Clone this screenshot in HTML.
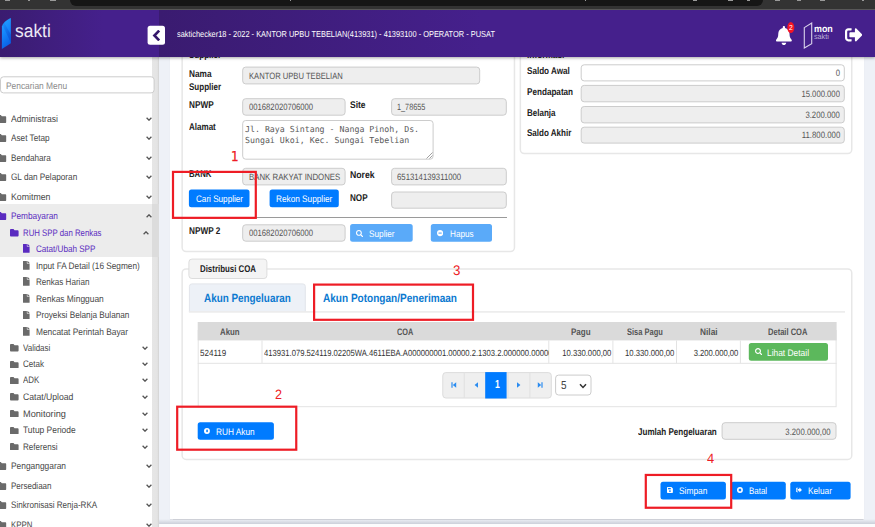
<!DOCTYPE html>
<html lang="id"><head><meta charset="utf-8"><title>SAKTI - Catat/Ubah SPP</title>
<style>
html,body{margin:0;padding:0;}
body{text-rendering:geometricPrecision;width:875px;height:527px;overflow:hidden;position:relative;background:#eef1f7;font-family:"Liberation Sans",sans-serif;}
div,span,svg{position:absolute;box-sizing:border-box;}
.t{white-space:nowrap;display:block;}
.inp{background:#eee;border:1px solid #ccc;border-radius:3px;}
.inpw{background:#fff;border:1px solid #ccc;border-radius:3px;}
.btn{background:#007bff;border-radius:2.5px;}
.btnl{background:#5aaaf9;border-radius:2.5px;}
.fs{border:1px solid #ddd;border-radius:4px;}
.red{border:1.6px solid #ee1c25;}

</style></head>
<body>
<div class="" style="left:170.30px;top:50.00px;width:693.40px;height:468.90px;background:#fff;box-shadow:0 0.5px 1px rgba(0,0,0,.12);"></div>
<svg style="left:180px;top:39px;width:337px;height:215px" viewBox="0 0 337 215"><rect x="2.15" y="1.75" width="332.30" height="210.80" rx="4" fill="none" stroke="#e7e7e7" stroke-width="1.5"/></svg>
<span class="t" id="t0" style="left:189.00px;transform-origin:0 50%;top:48.85px;font-size:9.79px;line-height:13.71px;font-weight:700;color:#222;transform:scaleX(0.8201);">Supplier</span>
<span class="t" id="t1" style="left:189.00px;transform-origin:0 50%;top:67.84px;font-size:9.79px;line-height:13.71px;font-weight:700;color:#222;transform:scaleX(0.8446);">Nama</span>
<span class="t" id="t2" style="left:189.00px;transform-origin:0 50%;top:81.24px;font-size:9.79px;line-height:13.71px;font-weight:700;color:#222;transform:scaleX(0.8201);">Supplier</span>
<svg style="left:241px;top:65px;width:241px;height:21px" viewBox="0 0 241 21"><rect x="1.70" y="2.10" width="237.00" height="16.80" rx="3" fill="#eeeeee" stroke="#cccccc" stroke-width="1.0"/></svg>
<span class="t" id="t3" style="left:248.50px;transform-origin:0 50%;top:70.27px;font-size:9.18px;line-height:12.85px;font-weight:400;color:#555;transform:scaleX(0.8315);">KANTOR UPBU TEBELIAN</span>
<span class="t" id="t4" style="left:189.00px;transform-origin:0 50%;top:98.74px;font-size:9.79px;line-height:13.71px;font-weight:700;color:#222;transform:scaleX(0.8383);">NPWP</span>
<svg style="left:241px;top:97px;width:106px;height:20px" viewBox="0 0 106 20"><rect x="1.70" y="1.70" width="102.40" height="16.50" rx="3" fill="#eeeeee" stroke="#cccccc" stroke-width="1.0"/></svg>
<span class="t" id="t5" style="left:248.50px;transform-origin:0 50%;top:100.97px;font-size:9.18px;line-height:12.85px;font-weight:400;color:#555;transform:scaleX(0.8377);">001682020706000</span>
<span class="t" id="t6" style="left:349.80px;transform-origin:0 50%;top:98.74px;font-size:9.79px;line-height:13.71px;font-weight:700;color:#222;transform:scaleX(0.8689);">Site</span>
<svg style="left:390px;top:97px;width:118px;height:20px" viewBox="0 0 118 20"><rect x="1.60" y="1.70" width="114.70" height="16.50" rx="3" fill="#eeeeee" stroke="#cccccc" stroke-width="1.0"/></svg>
<span class="t" id="t7" style="left:396.60px;transform-origin:0 50%;top:100.97px;font-size:9.18px;line-height:12.85px;font-weight:400;color:#555;transform:scaleX(0.7951);">1_78655</span>
<span class="t" id="t8" style="left:189.00px;transform-origin:0 50%;top:120.84px;font-size:9.79px;line-height:13.71px;font-weight:700;color:#222;transform:scaleX(0.8215);">Alamat</span>
<svg style="left:241px;top:119px;width:194px;height:42px" viewBox="0 0 194 42"><rect x="1.70" y="1.50" width="190.40" height="38.70" rx="3" fill="#ffffff" stroke="#cccccc" stroke-width="1.0"/></svg>
<span class="t" id="t9" style="left:244.70px;transform-origin:0 50%;top:124.07px;font-size:8.33px;line-height:11.66px;font-weight:400;color:#5a5a5a;font-family:'DejaVu Sans Mono','Liberation Mono',monospace;transform:scaleX(0.9920);">Jl. Raya Sintang - Nanga Pinoh, Ds.</span>
<span class="t" id="t10" style="left:244.70px;transform-origin:0 50%;top:135.47px;font-size:8.33px;line-height:11.66px;font-weight:400;color:#5a5a5a;font-family:'DejaVu Sans Mono','Liberation Mono',monospace;transform:scaleX(0.9920);">Sungai Ukoi, Kec. Sungai Tebelian</span>
<svg style="left:425.5px;top:151.5px;width:7px;height:7px" viewBox="0 0 7 7"><path d="M6.5,0.5 L0.5,6.5 M6.5,3.5 L3.5,6.5" stroke="#888" stroke-width="0.8" fill="none"/></svg>
<span class="t" id="t11" style="left:189.00px;transform-origin:0 50%;top:168.25px;font-size:9.79px;line-height:13.71px;font-weight:700;color:#222;transform:scaleX(0.7960);">BANK</span>
<svg style="left:241px;top:166px;width:106px;height:21px" viewBox="0 0 106 21"><rect x="1.70" y="2.30" width="102.40" height="16.60" rx="3" fill="#eeeeee" stroke="#cccccc" stroke-width="1.0"/></svg>
<span class="t" id="t12" style="left:248.50px;transform-origin:0 50%;top:171.47px;font-size:9.18px;line-height:12.85px;font-weight:400;color:#555;transform:scaleX(0.8530);">BANK RAKYAT INDONES</span>
<span class="t" id="t13" style="left:349.80px;transform-origin:0 50%;top:168.84px;font-size:9.79px;line-height:13.71px;font-weight:700;color:#222;transform:scaleX(0.8906);">Norek</span>
<svg style="left:390px;top:166px;width:118px;height:21px" viewBox="0 0 118 21"><rect x="1.60" y="2.30" width="114.70" height="16.60" rx="3" fill="#eeeeee" stroke="#cccccc" stroke-width="1.0"/></svg>
<span class="t" id="t14" style="left:396.60px;transform-origin:0 50%;top:171.47px;font-size:9.18px;line-height:12.85px;font-weight:400;color:#555;transform:scaleX(0.8465);">651314139311000</span>
<svg style="left:187px;top:188px;width:64px;height:21px" viewBox="0 0 64 21"><rect x="1.90" y="1.50" width="60.60" height="17.80" rx="2.5" fill="#007bff"/></svg>
<span class="t" id="t15" style="left:196.00px;transform-origin:0 50%;top:193.05px;font-size:9.49px;line-height:13.29px;font-weight:400;color:#fff;transform:scaleX(0.8572);">Cari Supplier</span>
<svg style="left:268px;top:188px;width:72px;height:21px" viewBox="0 0 72 21"><rect x="1.60" y="1.50" width="69.20" height="17.80" rx="2.5" fill="#007bff"/></svg>
<span class="t" id="t16" style="left:275.90px;transform-origin:0 50%;top:193.05px;font-size:9.49px;line-height:13.29px;font-weight:400;color:#fff;transform:scaleX(0.8680);">Rekon Supplier</span>
<span class="t" id="t17" style="left:349.80px;transform-origin:0 50%;top:192.05px;font-size:9.79px;line-height:13.71px;font-weight:700;color:#222;transform:scaleX(0.8301);">NOP</span>
<svg style="left:390px;top:190px;width:118px;height:20px" viewBox="0 0 118 20"><rect x="1.60" y="2.00" width="114.70" height="16.20" rx="3" fill="#eeeeee" stroke="#cccccc" stroke-width="1.0"/></svg>
<div class="" style="left:189.00px;top:217.00px;width:317.80px;height:1.00px;background:#9a9a9a;"></div>
<span class="t" id="t18" style="left:189.00px;transform-origin:0 50%;top:225.25px;font-size:9.79px;line-height:13.71px;font-weight:700;color:#222;transform:scaleX(0.8385);">NPWP 2</span>
<svg style="left:241px;top:223px;width:106px;height:20px" viewBox="0 0 106 20"><rect x="1.70" y="1.80" width="102.40" height="16.40" rx="3" fill="#eeeeee" stroke="#cccccc" stroke-width="1.0"/></svg>
<span class="t" id="t19" style="left:248.50px;transform-origin:0 50%;top:227.17px;font-size:9.18px;line-height:12.85px;font-weight:400;color:#555;transform:scaleX(0.8377);">001682020706000</span>
<svg style="left:349px;top:223px;width:65px;height:20px" viewBox="0 0 65 20"><rect x="1.10" y="1.00" width="62.60" height="17.80" rx="2.5" fill="#5aaaf9"/></svg>
<svg style="left:356.00px;top:230.10px;width:7.20px;height:7.20px" viewBox="0 0 512 512" preserveAspectRatio="none"><path fill="#fff" d="M505 442.7L405.3 343c-4.5-4.5-10.6-7-17-7H372c27.6-35.3 44-79.7 44-128C416 93.1 322.9 0 208 0S0 93.1 0 208s93.100 208 208 208c48.300 0 92.700-16.400 128-44v16.300c0 6.400 2.500 12.500 7 17l99.700 99.700c9.400 9.400 24.600 9.400 33.900 0l28.300-28.300c9.400-9.400 9.400-24.600.1-34zM208 336c-70.700 0-128-57.200-128-128 0-70.700 57.200-128 128-128 70.700 0 128 57.200 128 128 0 70.700-57.200 128-128 128z"/></svg>
<span class="t" id="t20" style="left:369.00px;transform-origin:0 50%;top:227.55px;font-size:9.49px;line-height:13.29px;font-weight:400;color:#fff;transform:scaleX(0.8669);">Suplier</span>
<svg style="left:429px;top:223px;width:64px;height:20px" viewBox="0 0 64 20"><rect x="1.80" y="1.00" width="61.20" height="17.80" rx="2.5" fill="#5aaaf9"/></svg>
<svg style="left:436.9px;top:230.4px;width:6.2px;height:6.2px" viewBox="0 0 10 10"><circle cx="5" cy="5" r="5" fill="#fff"/><rect x="2.4" y="4.1" width="5.2" height="1.8" fill="#5aaaf9"/></svg>
<span class="t" id="t21" style="left:449.70px;transform-origin:0 50%;top:227.55px;font-size:9.49px;line-height:13.29px;font-weight:400;color:#fff;transform:scaleX(0.8606);">Hapus</span>
<svg style="left:518px;top:39px;width:336px;height:117px" viewBox="0 0 336 117"><rect x="2.35" y="1.75" width="331.40" height="112.80" rx="4" fill="none" stroke="#e7e7e7" stroke-width="1.5"/></svg>
<span class="t" id="t22" style="left:526.80px;transform-origin:0 50%;top:49.24px;font-size:9.79px;line-height:13.71px;font-weight:700;color:#222;transform:scaleX(0.8500);">Informasi</span>
<span class="t" id="t23" style="left:526.80px;transform-origin:0 50%;top:65.24px;font-size:9.79px;line-height:13.71px;font-weight:700;color:#222;transform:scaleX(0.8288);">Saldo Awal</span>
<svg style="left:579px;top:63px;width:267px;height:20px" viewBox="0 0 267 20"><rect x="2.20" y="1.80" width="263.10" height="16.10" rx="3" fill="#ffffff" stroke="#cccccc" stroke-width="1.0"/></svg>
<span class="t" id="t24" style="right:35.20px;transform-origin:100% 50%;top:67.12px;font-size:9.18px;line-height:12.85px;font-weight:400;color:#555;transform:scaleX(0.8416);">0</span>
<span class="t" id="t25" style="left:526.80px;transform-origin:0 50%;top:85.94px;font-size:9.79px;line-height:13.71px;font-weight:700;color:#222;transform:scaleX(0.8313);">Pendapatan</span>
<svg style="left:579px;top:83px;width:267px;height:21px" viewBox="0 0 267 21"><rect x="2.20" y="2.40" width="263.10" height="16.40" rx="3" fill="#eeeeee" stroke="#cccccc" stroke-width="1.0"/></svg>
<span class="t" id="t26" style="right:35.20px;transform-origin:100% 50%;top:87.88px;font-size:9.18px;line-height:12.85px;font-weight:400;color:#555;transform:scaleX(0.8387);">15.000.000</span>
<span class="t" id="t27" style="left:526.80px;transform-origin:0 50%;top:106.84px;font-size:9.79px;line-height:13.71px;font-weight:700;color:#222;transform:scaleX(0.8190);">Belanja</span>
<svg style="left:579px;top:105px;width:267px;height:20px" viewBox="0 0 267 20"><rect x="2.20" y="1.50" width="263.10" height="16.40" rx="3" fill="#eeeeee" stroke="#cccccc" stroke-width="1.0"/></svg>
<span class="t" id="t28" style="right:35.20px;transform-origin:100% 50%;top:108.97px;font-size:9.18px;line-height:12.85px;font-weight:400;color:#555;transform:scaleX(0.8429);">3.200.000</span>
<span class="t" id="t29" style="left:526.80px;transform-origin:0 50%;top:126.94px;font-size:9.79px;line-height:13.71px;font-weight:700;color:#222;transform:scaleX(0.8204);">Saldo Akhir</span>
<svg style="left:579px;top:125px;width:267px;height:20px" viewBox="0 0 267 20"><rect x="2.20" y="2.20" width="263.10" height="15.90" rx="3" fill="#eeeeee" stroke="#cccccc" stroke-width="1.0"/></svg>
<span class="t" id="t30" style="right:35.20px;transform-origin:100% 50%;top:129.42px;font-size:9.18px;line-height:12.85px;font-weight:400;color:#555;transform:scaleX(0.8511);">11.800.000</span>
<svg style="left:180px;top:267px;width:674px;height:195px" viewBox="0 0 674 195"><rect x="2.15" y="1.95" width="669.60" height="190.50" rx="4" fill="none" stroke="#e7e7e7" stroke-width="1.5"/></svg>
<svg style="left:187px;top:257px;width:82px;height:23px" viewBox="0 0 82 23"><rect x="1.90" y="2.10" width="78.00" height="19.40" rx="3" fill="#f4f4f4" stroke="#dddddd" stroke-width="1.0"/></svg>
<span class="t" id="t31" style="left:199.50px;transform-origin:0 50%;top:262.85px;font-size:9.79px;line-height:13.71px;font-weight:700;color:#222;transform:scaleX(0.8050);">Distribusi COA</span>
<svg style="left:187px;top:282px;width:120px;height:34px" viewBox="0 0 120 34"><rect x="2.40" y="1.90" width="115.90" height="30.40" rx="2.5" fill="#edf1f7" stroke="#e2e5ea" stroke-width="1.0"/></svg>
<div class="" style="left:187.00px;top:311.90px;width:121.00px;height:4.00px;background:#fff;"></div>
<svg style="left:187px;top:310px;width:659px;height:4px" viewBox="0 0 659 4"><rect x="1.90" y="1.10" width="656.10" height="1.60" rx="0" fill="#ececec"/></svg>
<span class="t" id="t32" style="left:204.00px;transform-origin:0 50%;top:290.42px;font-size:11.83px;line-height:16.56px;font-weight:700;color:#0b79d0;transform:scaleX(0.8357);">Akun Pengeluaran</span>
<span class="t" id="t33" style="left:322.70px;transform-origin:0 50%;top:290.42px;font-size:11.83px;line-height:16.56px;font-weight:700;color:#0b79d0;transform:scaleX(0.8495);">Akun Potongan/Penerimaan</span>
<svg style="left:196px;top:329px;width:642px;height:80px" viewBox="0 0 642 80"><rect x="2.20" y="1.50" width="637.90" height="76.20" rx="0" fill="none" stroke="#e3e3e3" stroke-width="1.0"/></svg>
<svg style="left:196px;top:321px;width:642px;height:21px" viewBox="0 0 642 21"><rect x="1.70" y="1.00" width="638.90" height="18.40" rx="0" fill="#dadada"/></svg>
<span class="t" id="t34" style="left:219.60px;transform-origin:0 50%;top:325.86px;font-size:9.49px;line-height:13.29px;font-weight:700;color:#555;transform:scaleX(0.8264);">Akun</span>
<span class="t" id="t35" style="left:396.90px;transform-origin:0 50%;top:325.86px;font-size:9.49px;line-height:13.29px;font-weight:700;color:#555;transform:scaleX(0.7733);">COA</span>
<span class="t" id="t36" style="left:570.70px;transform-origin:0 50%;top:325.86px;font-size:9.49px;line-height:13.29px;font-weight:700;color:#555;transform:scaleX(0.8447);">Pagu</span>
<span class="t" id="t37" style="left:626.70px;transform-origin:0 50%;top:325.86px;font-size:9.49px;line-height:13.29px;font-weight:700;color:#555;transform:scaleX(0.7895);">Sisa Pagu</span>
<span class="t" id="t38" style="left:699.70px;transform-origin:0 50%;top:325.86px;font-size:9.49px;line-height:13.29px;font-weight:700;color:#555;transform:scaleX(0.8786);">Nilai</span>
<span class="t" id="t39" style="left:768.00px;transform-origin:0 50%;top:325.86px;font-size:9.49px;line-height:13.29px;font-weight:700;color:#555;transform:scaleX(0.7952);">Detail COA</span>
<svg style="left:196px;top:361px;width:642px;height:4px" viewBox="0 0 642 4"><rect x="1.70" y="1.80" width="638.90" height="1.00" rx="0" fill="#e3e3e3"/></svg>
<svg style="left:260px;top:339px;width:4px;height:26px" viewBox="0 0 4 26"><rect x="1.50" y="1.40" width="1.00" height="22.80" rx="0" fill="#e3e3e3"/></svg>
<svg style="left:547px;top:339px;width:4px;height:26px" viewBox="0 0 4 26"><rect x="1.30" y="1.40" width="1.00" height="22.80" rx="0" fill="#e3e3e3"/></svg>
<svg style="left:611px;top:339px;width:4px;height:26px" viewBox="0 0 4 26"><rect x="1.40" y="1.40" width="1.00" height="22.80" rx="0" fill="#e3e3e3"/></svg>
<svg style="left:675px;top:339px;width:3px;height:26px" viewBox="0 0 3 26"><rect x="1.00" y="1.40" width="1.00" height="22.80" rx="0" fill="#e3e3e3"/></svg>
<svg style="left:738px;top:339px;width:4px;height:26px" viewBox="0 0 4 26"><rect x="1.90" y="1.40" width="1.00" height="22.80" rx="0" fill="#e3e3e3"/></svg>
<span class="t" id="t40" style="left:199.70px;transform-origin:0 50%;top:346.81px;font-size:8.98px;line-height:12.57px;font-weight:400;color:#333;transform:scaleX(0.8952);">524119</span>
<div style="left:263px;top:341px;width:285.6px;height:22px;overflow:hidden;">
<span class="t" id="t41" style="left:0.80px;transform-origin:0 50%;top:5.81px;font-size:8.98px;line-height:12.57px;font-weight:400;color:#333;transform:scaleX(0.8522);">413931.079.524119.02205WA.4611EBA.A000000001.00000.2.1303.2.000000.000000</span>
</div>
<span class="t" id="t42" style="right:263.80px;transform-origin:100% 50%;top:346.81px;font-size:8.98px;line-height:12.57px;font-weight:400;color:#333;transform:scaleX(0.8560);">10.330.000,00</span>
<span class="t" id="t43" style="right:200.20px;transform-origin:100% 50%;top:346.81px;font-size:8.98px;line-height:12.57px;font-weight:400;color:#333;transform:scaleX(0.8595);">10.330.000,00</span>
<span class="t" id="t44" style="right:136.40px;transform-origin:100% 50%;top:346.81px;font-size:8.98px;line-height:12.57px;font-weight:400;color:#333;transform:scaleX(0.8535);">3.200.000,00</span>
<svg style="left:747px;top:342px;width:82px;height:20px" viewBox="0 0 82 20"><rect x="1.80" y="1.00" width="79.20" height="17.80" rx="2.5" fill="#5cb85c"/></svg>
<svg style="left:754.60px;top:348.00px;width:7.40px;height:7.40px" viewBox="0 0 512 512" preserveAspectRatio="none"><path fill="#fff" d="M505 442.7L405.3 343c-4.5-4.5-10.6-7-17-7H372c27.6-35.3 44-79.7 44-128C416 93.1 322.9 0 208 0S0 93.1 0 208s93.100 208 208 208c48.300 0 92.700-16.400 128-44v16.300c0 6.400 2.500 12.500 7 17l99.700 99.700c9.400 9.400 24.600 9.400 33.900 0l28.300-28.300c9.400-9.400 9.400-24.600.1-34zM208 336c-70.700 0-128-57.200-128-128 0-70.700 57.200-128 128-128 70.700 0 128 57.200 128 128 0 70.700-57.200 128-128 128z"/></svg>
<span class="t" id="t45" style="left:767.40px;transform-origin:0 50%;top:346.66px;font-size:9.49px;line-height:13.29px;font-weight:400;color:#fff;transform:scaleX(0.8851);">Lihat Detail</span>
<svg style="left:441px;top:371px;width:112px;height:29px" viewBox="0 0 112 29"><rect x="1.80" y="1.60" width="108.50" height="25.40" rx="3" fill="#efefef" stroke="#dcdcdc" stroke-width="1.0"/></svg>
<svg style="left:462px;top:371px;width:4px;height:28px" viewBox="0 0 4 28"><rect x="1.70" y="1.60" width="1.00" height="25.40" rx="0" fill="#e0e0e0"/></svg>
<svg style="left:484px;top:371px;width:4px;height:28px" viewBox="0 0 4 28"><rect x="1.60" y="1.60" width="1.00" height="25.40" rx="0" fill="#e0e0e0"/></svg>
<svg style="left:506px;top:371px;width:4px;height:28px" viewBox="0 0 4 28"><rect x="1.50" y="1.60" width="1.00" height="25.40" rx="0" fill="#e0e0e0"/></svg>
<svg style="left:528px;top:371px;width:4px;height:28px" viewBox="0 0 4 28"><rect x="1.40" y="1.60" width="1.00" height="25.40" rx="0" fill="#e0e0e0"/></svg>
<svg style="left:484px;top:371px;width:24px;height:29px" viewBox="0 0 24 29"><rect x="1.20" y="1.10" width="21.40" height="26.40" rx="0" fill="#007bff"/></svg>
<span class="t" id="t46" style="left:494.60px;transform-origin:0 50%;top:376.56px;font-size:11.63px;line-height:16.28px;font-weight:700;color:#fff;transform:scaleX(0.7420);">1</span>
<svg style="left:450.5px;top:382.0px;width:6px;height:6px" viewBox="0 0 6 6"><path d="M0.4,0.3 h1.2 v5.4 h-1.2 z M5.2,0.3 v5.4 L1.8,3 z" fill="#2b8cf0"/></svg>
<svg style="left:473.5px;top:382.0px;width:5px;height:6px" viewBox="0 0 5 6"><path d="M4,0.3 v5.4 L0.6,3 z" fill="#2b8cf0"/></svg>
<svg style="left:516.0px;top:382.0px;width:5px;height:6px" viewBox="0 0 5 6"><path d="M1,0.3 v5.4 L4.4,3 z" fill="#2b8cf0"/></svg>
<svg style="left:536.5px;top:382.0px;width:6px;height:6px" viewBox="0 0 6 6"><path d="M5.600,0.3 h-1.2 v5.4 h1.2 z M0.8,0.3 v5.4 L4.2,3 z" fill="#2b8cf0"/></svg>
<svg style="left:554px;top:373px;width:39px;height:24px" viewBox="0 0 39 24"><rect x="1.60" y="2.10" width="35.40" height="19.90" rx="3" fill="#ffffff" stroke="#cccccc" stroke-width="1.0"/></svg>
<span class="t" id="t47" style="left:560.60px;transform-origin:0 50%;top:378.16px;font-size:11.63px;line-height:16.28px;font-weight:400;color:#444;transform:scaleX(0.8502);">5</span>
<svg style="left:578.6px;top:382.6px;width:8px;height:6px" viewBox="0 0 8 6"><path d="M1,1.2 L4,4.4 L7,1.2" fill="none" stroke="#333" stroke-width="1.5"/></svg>
<svg style="left:196px;top:421px;width:79px;height:20px" viewBox="0 0 79 20"><rect x="1.70" y="1.20" width="76.20" height="17.60" rx="2.5" fill="#007bff"/></svg>
<svg style="left:203.8px;top:427.8px;width:5.9px;height:5.9px" viewBox="0 0 10 10"><circle cx="5" cy="5" r="5" fill="#fff"/><ellipse cx="5.200" cy="5" rx="1.500" ry="2.300" fill="#007bff"/></svg>
<span class="t" id="t48" style="left:216.30px;transform-origin:0 50%;top:425.66px;font-size:9.49px;line-height:13.29px;font-weight:400;color:#fff;transform:scaleX(0.8740);">RUH Akun</span>
<span class="t" id="t49" style="left:638.00px;transform-origin:0 50%;top:425.64px;font-size:9.79px;line-height:13.71px;font-weight:700;color:#222;transform:scaleX(0.8236);">Jumlah Pengeluaran</span>
<svg style="left:720px;top:421px;width:118px;height:20px" viewBox="0 0 118 20"><rect x="2.10" y="1.70" width="113.90" height="16.60" rx="3" fill="#eeeeee" stroke="#cccccc" stroke-width="1.0"/></svg>
<span class="t" id="t50" style="right:44.00px;transform-origin:100% 50%;top:425.98px;font-size:9.18px;line-height:12.85px;font-weight:400;color:#555;transform:scaleX(0.8439);">3.200.000,00</span>
<svg style="left:659px;top:480px;width:68px;height:21px" viewBox="0 0 68 21"><rect x="1.50" y="1.70" width="65.40" height="17.70" rx="2.5" fill="#007bff"/></svg>
<svg style="left:666.9px;top:487.1px;width:5.9px;height:5.9px" viewBox="0 0 10 10"><path d="M0,1.200 a1.200,1.200 0 0 1 1.200,-1.200 h6.200 l2.600,2.600 v6.200 a1.200,1.200 0 0 1 -1.200,1.200 h-7.600 a1.200,1.200 0 0 1 -1.200,-1.200 z" fill="#fff"/><rect x="1.800" y="1.600" width="4.600" height="2.300" fill="#007bff"/><circle cx="5" cy="6.900" r="1.500" fill="#007bff"/></svg>
<span class="t" id="t51" style="left:678.90px;transform-origin:0 50%;top:485.16px;font-size:9.49px;line-height:13.29px;font-weight:400;color:#fff;transform:scaleX(0.8828);">Simpan</span>
<svg style="left:730px;top:480px;width:57px;height:21px" viewBox="0 0 57 21"><rect x="1.00" y="1.70" width="54.80" height="17.70" rx="2.5" fill="#007bff"/></svg>
<svg style="left:736.9px;top:487.1px;width:5.9px;height:5.9px" viewBox="0 0 10 10"><circle cx="5" cy="5" r="5" fill="#fff"/><path d="M3.100,3.100 L6.900,6.900 M6.900,3.100 L3.100,6.900" stroke="#007bff" stroke-width="1.700"/></svg>
<span class="t" id="t52" style="left:748.80px;transform-origin:0 50%;top:485.16px;font-size:9.49px;line-height:13.29px;font-weight:400;color:#fff;transform:scaleX(0.8370);">Batal</span>
<svg style="left:789px;top:480px;width:63px;height:21px" viewBox="0 0 63 21"><rect x="1.30" y="1.70" width="60.30" height="17.70" rx="2.5" fill="#007bff"/></svg>
<svg style="left:796.40px;top:487.00px;width:5.90px;height:5.90px" viewBox="0 0 512 512" preserveAspectRatio="none"><path fill="#fff" d="M497 273L329 441c-15 15-41 4.500-41-17v-96H152c-13.300 0-24-10.700-24-24v-96c0-13.300 10.700-24 24-24h136V88c0-21.400 25.900-32 41-17l168 168c9.300 9.400 9.300 24.600 0 34zM192 436v-40c0-6.600-5.400-12-12-12H96c-17.700 0-32-14.300-32-32V160c0-17.700 14.300-32 32-32h84c6.600 0 12-5.400 12-12V76c0-6.600-5.400-12-12-12H96c-53 0-96 43-96 96v192c0 53 43 96 96 96h84c6.600 0 12-5.400 12-12z"/></svg>
<span class="t" id="t53" style="left:808.40px;transform-origin:0 50%;top:485.16px;font-size:9.49px;line-height:13.29px;font-weight:400;color:#fff;transform:scaleX(0.8716);">Keluar</span>
<svg style="left:170px;top:169px;width:88px;height:51px" viewBox="0 0 88 51"><rect x="3.00" y="2.90" width="82.80" height="45.95" rx="0" fill="none" stroke="#ee1c25" stroke-width="2.2"/></svg>
<span class="t" id="t54" style="left:231.00px;transform-origin:0 50%;top:147.58px;font-size:13.6px;line-height:19.04px;font-weight:400;color:#ee1c25;font-family:'DejaVu Sans',sans-serif;transform:scaleX(0.8780);-webkit-text-stroke:0.3px #ee1c25;">1</span>
<svg style="left:175px;top:404px;width:124px;height:48px" viewBox="0 0 124 48"><rect x="2.20" y="2.70" width="119.05" height="43.00" rx="0" fill="none" stroke="#ee1c25" stroke-width="2.2"/></svg>
<span class="t" id="t55" style="left:274.60px;transform-origin:0 50%;top:385.08px;font-size:13.6px;line-height:19.04px;font-weight:400;color:#ee1c25;transform:scaleX(0.9256);">2</span>
<svg style="left:312px;top:282px;width:164px;height:40px" viewBox="0 0 164 40"><rect x="2.10" y="2.60" width="158.90" height="35.20" rx="0" fill="none" stroke="#ee1c25" stroke-width="2.2"/></svg>
<span class="t" id="t56" style="left:452.60px;transform-origin:0 50%;top:260.54px;font-size:13.8px;line-height:19.32px;font-weight:400;color:#ee1c25;transform:scaleX(0.9626);">3</span>
<svg style="left:643px;top:472px;width:91px;height:38px" viewBox="0 0 91 38"><rect x="2.80" y="2.95" width="85.40" height="32.80" rx="0" fill="none" stroke="#ee1c25" stroke-width="2.2"/></svg>
<span class="t" id="t57" style="left:706.60px;transform-origin:0 50%;top:449.18px;font-size:13.6px;line-height:19.04px;font-weight:400;color:#ee1c25;transform:scaleX(0.9521);">4</span>
<div class="" style="left:158.90px;top:519.00px;width:716.10px;height:4.80px;background:linear-gradient(180deg,rgba(80,90,110,0) 0%,rgba(80,90,110,.22) 100%);"></div>
<div class="" style="left:158.90px;top:523.70px;width:716.10px;height:4.00px;background:#fcfcfd;"></div>
<div class="" style="left:0.00px;top:50.00px;width:152.10px;height:480.00px;background:#fff;"></div>
<div class="" style="left:152.10px;top:50.00px;width:6.80px;height:480.00px;background:linear-gradient(90deg,#e6e6e6 0%,#e4e4e4 75%,#d2d2d2 100%);"></div>
<div class="" style="left:0.00px;top:204.40px;width:152.10px;height:52.60px;background:#ececec;"></div>
<div class="" style="left:152.10px;top:204.40px;width:6.80px;height:52.60px;background:#dcdcdc;"></div>
<svg style="left:-1px;top:75px;width:157px;height:20px" viewBox="0 0 157 20"><rect x="1.50" y="1.80" width="153.60" height="16.10" rx="3" fill="#ffffff" stroke="#cccccc" stroke-width="1.0"/></svg>
<span class="t" id="t58" style="left:5.50px;transform-origin:0 50%;top:79.66px;font-size:9.49px;line-height:13.29px;font-weight:400;color:#8a8a8a;transform:scaleX(0.8845);">Pencarian Menu</span>
<svg style="left:-2.60px;top:114.60px;width:9.20px;height:8.00px" viewBox="0 64 512 384" preserveAspectRatio="none"><path fill="#6a6a6a" d="M464 128H272l-64-64H48C21.49 64 0 85.49 0 112v288c0 26.51 21.49 48 48 48h416c26.51 0 48-21.49 48-48V176c0-26.51-21.49-48-48-48z"/></svg>
<span class="t" id="t59" style="left:10.50px;transform-origin:0 50%;top:112.75px;font-size:9.49px;line-height:13.29px;font-weight:400;color:#474747;transform:scaleX(0.9079);">Administrasi</span>
<svg style="left:145.80px;top:116.60px;width:6px;height:4px" viewBox="0 0 6 4"><path d="M0.6,0.8 L3,3.2 L5.4,0.8" fill="none" stroke="#555" stroke-width="1.3"/></svg>
<svg style="left:-2.60px;top:134.30px;width:9.20px;height:8.00px" viewBox="0 64 512 384" preserveAspectRatio="none"><path fill="#6a6a6a" d="M464 128H272l-64-64H48C21.49 64 0 85.49 0 112v288c0 26.51 21.49 48 48 48h416c26.51 0 48-21.49 48-48V176c0-26.51-21.49-48-48-48z"/></svg>
<span class="t" id="t60" style="left:10.50px;transform-origin:0 50%;top:132.45px;font-size:9.49px;line-height:13.29px;font-weight:400;color:#474747;transform:scaleX(0.8666);">Aset Tetap</span>
<svg style="left:145.80px;top:136.30px;width:6px;height:4px" viewBox="0 0 6 4"><path d="M0.6,0.8 L3,3.2 L5.4,0.8" fill="none" stroke="#555" stroke-width="1.3"/></svg>
<svg style="left:-2.60px;top:153.60px;width:9.20px;height:8.00px" viewBox="0 64 512 384" preserveAspectRatio="none"><path fill="#6a6a6a" d="M464 128H272l-64-64H48C21.49 64 0 85.49 0 112v288c0 26.51 21.49 48 48 48h416c26.51 0 48-21.49 48-48V176c0-26.51-21.49-48-48-48z"/></svg>
<span class="t" id="t61" style="left:10.50px;transform-origin:0 50%;top:151.75px;font-size:9.49px;line-height:13.29px;font-weight:400;color:#474747;transform:scaleX(0.8574);">Bendahara</span>
<svg style="left:145.80px;top:155.60px;width:6px;height:4px" viewBox="0 0 6 4"><path d="M0.6,0.8 L3,3.2 L5.4,0.8" fill="none" stroke="#555" stroke-width="1.3"/></svg>
<svg style="left:-2.60px;top:173.30px;width:9.20px;height:8.00px" viewBox="0 64 512 384" preserveAspectRatio="none"><path fill="#6a6a6a" d="M464 128H272l-64-64H48C21.49 64 0 85.49 0 112v288c0 26.51 21.49 48 48 48h416c26.51 0 48-21.49 48-48V176c0-26.51-21.49-48-48-48z"/></svg>
<span class="t" id="t62" style="left:10.50px;transform-origin:0 50%;top:171.45px;font-size:9.49px;line-height:13.29px;font-weight:400;color:#474747;transform:scaleX(0.8638);">GL dan Pelaporan</span>
<svg style="left:145.80px;top:175.30px;width:6px;height:4px" viewBox="0 0 6 4"><path d="M0.6,0.8 L3,3.2 L5.4,0.8" fill="none" stroke="#555" stroke-width="1.3"/></svg>
<svg style="left:-2.60px;top:192.70px;width:9.20px;height:8.00px" viewBox="0 64 512 384" preserveAspectRatio="none"><path fill="#6a6a6a" d="M464 128H272l-64-64H48C21.49 64 0 85.49 0 112v288c0 26.51 21.49 48 48 48h416c26.51 0 48-21.49 48-48V176c0-26.51-21.49-48-48-48z"/></svg>
<span class="t" id="t63" style="left:10.50px;transform-origin:0 50%;top:190.85px;font-size:9.49px;line-height:13.29px;font-weight:400;color:#474747;transform:scaleX(0.9250);">Komitmen</span>
<svg style="left:145.80px;top:194.70px;width:6px;height:4px" viewBox="0 0 6 4"><path d="M0.6,0.8 L3,3.2 L5.4,0.8" fill="none" stroke="#555" stroke-width="1.3"/></svg>
<svg style="left:-2.60px;top:212.30px;width:9.20px;height:8.00px" viewBox="0 64 512 384" preserveAspectRatio="none"><path fill="#5a2bc0" d="M464 128H272l-64-64H48C21.49 64 0 85.49 0 112v288c0 26.51 21.49 48 48 48h416c26.51 0 48-21.49 48-48V176c0-26.51-21.49-48-48-48z"/></svg>
<span class="t" id="t64" style="left:10.50px;transform-origin:0 50%;top:210.45px;font-size:9.49px;line-height:13.29px;font-weight:400;color:#5a2bc0;transform:scaleX(0.8721);">Pembayaran</span>
<svg style="left:145.80px;top:214.30px;width:6px;height:4px" viewBox="0 0 6 4"><path d="M0.6,3.2 L3,0.8 L5.4,3.2" fill="none" stroke="#555" stroke-width="1.3"/></svg>
<svg style="left:10.00px;top:229.20px;width:8.60px;height:7.40px" viewBox="0 64 512 384" preserveAspectRatio="none"><path fill="#5a2bc0" d="M464 128H272l-64-64H48C21.49 64 0 85.49 0 112v288c0 26.51 21.49 48 48 48h416c26.51 0 48-21.49 48-48V176c0-26.51-21.49-48-48-48z"/></svg>
<span class="t" id="t65" style="left:22.60px;transform-origin:0 50%;top:227.05px;font-size:9.49px;line-height:13.29px;font-weight:400;color:#5a2bc0;transform:scaleX(0.8231);">RUH SPP dan Renkas</span>
<svg style="left:142.60px;top:231.00px;width:6px;height:4px" viewBox="0 0 6 4"><path d="M0.6,3.2 L3,0.8 L5.4,3.2" fill="none" stroke="#555" stroke-width="1.3"/></svg>
<svg style="left:23.40px;top:244.20px;width:6.60px;height:8.80px" viewBox="0 0 384 512" preserveAspectRatio="none"><path fill="#5a2bc0" d="M224 136V0H24C10.7 0 0 10.7 0 24v464c0 13.3 10.7 24 24 24h336c13.3 0 24-10.7 24-24V160H248c-13.2 0-24-10.8-24-24zm160-14.1v6.1H256V0h6.1c6.4 0 12.5 2.5 17 7l97.900 98c4.500 4.500 7 10.600 7 16.900z"/></svg>
<span class="t" id="t66" style="left:35.60px;transform-origin:0 50%;top:243.05px;font-size:9.49px;line-height:13.29px;font-weight:400;color:#5a2bc0;transform:scaleX(0.8535);">Catat/Ubah SPP</span>
<svg style="left:23.40px;top:261.00px;width:6.60px;height:8.80px" viewBox="0 0 384 512" preserveAspectRatio="none"><path fill="#6a6a6a" d="M224 136V0H24C10.7 0 0 10.7 0 24v464c0 13.3 10.7 24 24 24h336c13.3 0 24-10.7 24-24V160H248c-13.2 0-24-10.8-24-24zm160-14.1v6.1H256V0h6.1c6.4 0 12.5 2.5 17 7l97.900 98c4.500 4.500 7 10.600 7 16.900z"/></svg>
<span class="t" id="t67" style="left:35.60px;transform-origin:0 50%;top:259.86px;font-size:9.49px;line-height:13.29px;font-weight:400;color:#474747;transform:scaleX(0.8711);">Input FA Detail (16 Segmen)</span>
<svg style="left:23.40px;top:277.20px;width:6.60px;height:8.80px" viewBox="0 0 384 512" preserveAspectRatio="none"><path fill="#6a6a6a" d="M224 136V0H24C10.7 0 0 10.7 0 24v464c0 13.3 10.7 24 24 24h336c13.3 0 24-10.7 24-24V160H248c-13.2 0-24-10.8-24-24zm160-14.1v6.1H256V0h6.1c6.4 0 12.5 2.5 17 7l97.900 98c4.500 4.500 7 10.600 7 16.900z"/></svg>
<span class="t" id="t68" style="left:35.60px;transform-origin:0 50%;top:276.06px;font-size:9.49px;line-height:13.29px;font-weight:400;color:#474747;transform:scaleX(0.8512);">Renkas Harian</span>
<svg style="left:23.40px;top:294.00px;width:6.60px;height:8.80px" viewBox="0 0 384 512" preserveAspectRatio="none"><path fill="#6a6a6a" d="M224 136V0H24C10.7 0 0 10.7 0 24v464c0 13.3 10.7 24 24 24h336c13.3 0 24-10.7 24-24V160H248c-13.2 0-24-10.8-24-24zm160-14.1v6.1H256V0h6.1c6.4 0 12.5 2.5 17 7l97.900 98c4.500 4.500 7 10.600 7 16.900z"/></svg>
<span class="t" id="t69" style="left:35.60px;transform-origin:0 50%;top:292.86px;font-size:9.49px;line-height:13.29px;font-weight:400;color:#474747;transform:scaleX(0.8868);">Renkas Mingguan</span>
<svg style="left:23.40px;top:310.60px;width:6.60px;height:8.80px" viewBox="0 0 384 512" preserveAspectRatio="none"><path fill="#6a6a6a" d="M224 136V0H24C10.7 0 0 10.7 0 24v464c0 13.3 10.7 24 24 24h336c13.3 0 24-10.7 24-24V160H248c-13.2 0-24-10.8-24-24zm160-14.1v6.1H256V0h6.1c6.4 0 12.5 2.5 17 7l97.900 98c4.500 4.500 7 10.600 7 16.900z"/></svg>
<span class="t" id="t70" style="left:35.60px;transform-origin:0 50%;top:309.46px;font-size:9.49px;line-height:13.29px;font-weight:400;color:#474747;transform:scaleX(0.8641);">Proyeksi Belanja Bulanan</span>
<svg style="left:23.40px;top:327.00px;width:6.60px;height:8.80px" viewBox="0 0 384 512" preserveAspectRatio="none"><path fill="#6a6a6a" d="M224 136V0H24C10.7 0 0 10.7 0 24v464c0 13.3 10.7 24 24 24h336c13.3 0 24-10.7 24-24V160H248c-13.2 0-24-10.8-24-24zm160-14.1v6.1H256V0h6.1c6.4 0 12.5 2.5 17 7l97.900 98c4.500 4.500 7 10.600 7 16.900z"/></svg>
<span class="t" id="t71" style="left:35.60px;transform-origin:0 50%;top:325.86px;font-size:9.49px;line-height:13.29px;font-weight:400;color:#474747;transform:scaleX(0.8813);">Mencatat Perintah Bayar</span>
<svg style="left:10.00px;top:344.20px;width:8.60px;height:7.40px" viewBox="0 64 512 384" preserveAspectRatio="none"><path fill="#6a6a6a" d="M464 128H272l-64-64H48C21.49 64 0 85.49 0 112v288c0 26.51 21.49 48 48 48h416c26.51 0 48-21.49 48-48V176c0-26.51-21.49-48-48-48z"/></svg>
<span class="t" id="t72" style="left:22.70px;transform-origin:0 50%;top:342.06px;font-size:9.49px;line-height:13.29px;font-weight:400;color:#474747;transform:scaleX(0.8396);">Validasi</span>
<svg style="left:142.20px;top:345.90px;width:6px;height:4px" viewBox="0 0 6 4"><path d="M0.6,0.8 L3,3.2 L5.4,0.8" fill="none" stroke="#555" stroke-width="1.3"/></svg>
<svg style="left:10.00px;top:360.60px;width:8.60px;height:7.40px" viewBox="0 64 512 384" preserveAspectRatio="none"><path fill="#6a6a6a" d="M464 128H272l-64-64H48C21.49 64 0 85.49 0 112v288c0 26.51 21.49 48 48 48h416c26.51 0 48-21.49 48-48V176c0-26.51-21.49-48-48-48z"/></svg>
<span class="t" id="t73" style="left:22.70px;transform-origin:0 50%;top:358.46px;font-size:9.49px;line-height:13.29px;font-weight:400;color:#474747;transform:scaleX(0.8434);">Cetak</span>
<svg style="left:142.20px;top:362.30px;width:6px;height:4px" viewBox="0 0 6 4"><path d="M0.6,0.8 L3,3.2 L5.4,0.8" fill="none" stroke="#555" stroke-width="1.3"/></svg>
<svg style="left:10.00px;top:376.60px;width:8.60px;height:7.40px" viewBox="0 64 512 384" preserveAspectRatio="none"><path fill="#6a6a6a" d="M464 128H272l-64-64H48C21.49 64 0 85.49 0 112v288c0 26.51 21.49 48 48 48h416c26.51 0 48-21.49 48-48V176c0-26.51-21.49-48-48-48z"/></svg>
<span class="t" id="t74" style="left:22.70px;transform-origin:0 50%;top:374.46px;font-size:9.49px;line-height:13.29px;font-weight:400;color:#474747;transform:scaleX(0.8352);">ADK</span>
<svg style="left:142.20px;top:378.30px;width:6px;height:4px" viewBox="0 0 6 4"><path d="M0.6,0.8 L3,3.2 L5.4,0.8" fill="none" stroke="#555" stroke-width="1.3"/></svg>
<svg style="left:10.00px;top:393.30px;width:8.60px;height:7.40px" viewBox="0 64 512 384" preserveAspectRatio="none"><path fill="#6a6a6a" d="M464 128H272l-64-64H48C21.49 64 0 85.49 0 112v288c0 26.51 21.49 48 48 48h416c26.51 0 48-21.49 48-48V176c0-26.51-21.49-48-48-48z"/></svg>
<span class="t" id="t75" style="left:22.70px;transform-origin:0 50%;top:391.16px;font-size:9.49px;line-height:13.29px;font-weight:400;color:#474747;transform:scaleX(0.9102);">Catat/Upload</span>
<svg style="left:142.20px;top:395.00px;width:6px;height:4px" viewBox="0 0 6 4"><path d="M0.6,0.8 L3,3.2 L5.4,0.8" fill="none" stroke="#555" stroke-width="1.3"/></svg>
<svg style="left:10.00px;top:410.10px;width:8.60px;height:7.40px" viewBox="0 64 512 384" preserveAspectRatio="none"><path fill="#6a6a6a" d="M464 128H272l-64-64H48C21.49 64 0 85.49 0 112v288c0 26.51 21.49 48 48 48h416c26.51 0 48-21.49 48-48V176c0-26.51-21.49-48-48-48z"/></svg>
<span class="t" id="t76" style="left:22.70px;transform-origin:0 50%;top:407.96px;font-size:9.49px;line-height:13.29px;font-weight:400;color:#474747;transform:scaleX(0.9685);">Monitoring</span>
<svg style="left:142.20px;top:411.80px;width:6px;height:4px" viewBox="0 0 6 4"><path d="M0.6,0.8 L3,3.2 L5.4,0.8" fill="none" stroke="#555" stroke-width="1.3"/></svg>
<svg style="left:10.00px;top:426.60px;width:8.60px;height:7.40px" viewBox="0 64 512 384" preserveAspectRatio="none"><path fill="#6a6a6a" d="M464 128H272l-64-64H48C21.49 64 0 85.49 0 112v288c0 26.51 21.49 48 48 48h416c26.51 0 48-21.49 48-48V176c0-26.51-21.49-48-48-48z"/></svg>
<span class="t" id="t77" style="left:22.70px;transform-origin:0 50%;top:424.46px;font-size:9.49px;line-height:13.29px;font-weight:400;color:#474747;transform:scaleX(0.8897);">Tutup Periode</span>
<svg style="left:142.20px;top:428.30px;width:6px;height:4px" viewBox="0 0 6 4"><path d="M0.6,0.8 L3,3.2 L5.4,0.8" fill="none" stroke="#555" stroke-width="1.3"/></svg>
<svg style="left:10.00px;top:443.00px;width:8.60px;height:7.40px" viewBox="0 64 512 384" preserveAspectRatio="none"><path fill="#6a6a6a" d="M464 128H272l-64-64H48C21.49 64 0 85.49 0 112v288c0 26.51 21.49 48 48 48h416c26.51 0 48-21.49 48-48V176c0-26.51-21.49-48-48-48z"/></svg>
<span class="t" id="t78" style="left:22.70px;transform-origin:0 50%;top:440.86px;font-size:9.49px;line-height:13.29px;font-weight:400;color:#474747;transform:scaleX(0.8499);">Referensi</span>
<svg style="left:142.20px;top:444.70px;width:6px;height:4px" viewBox="0 0 6 4"><path d="M0.6,0.8 L3,3.2 L5.4,0.8" fill="none" stroke="#555" stroke-width="1.3"/></svg>
<svg style="left:-2.60px;top:462.30px;width:9.20px;height:8.00px" viewBox="0 64 512 384" preserveAspectRatio="none"><path fill="#6a6a6a" d="M464 128H272l-64-64H48C21.49 64 0 85.49 0 112v288c0 26.51 21.49 48 48 48h416c26.51 0 48-21.49 48-48V176c0-26.51-21.49-48-48-48z"/></svg>
<span class="t" id="t79" style="left:10.60px;transform-origin:0 50%;top:460.46px;font-size:9.49px;line-height:13.29px;font-weight:400;color:#474747;transform:scaleX(0.8838);">Penganggaran</span>
<svg style="left:145.80px;top:464.30px;width:6px;height:4px" viewBox="0 0 6 4"><path d="M0.6,0.8 L3,3.2 L5.4,0.8" fill="none" stroke="#555" stroke-width="1.3"/></svg>
<svg style="left:-2.60px;top:481.80px;width:9.20px;height:8.00px" viewBox="0 64 512 384" preserveAspectRatio="none"><path fill="#6a6a6a" d="M464 128H272l-64-64H48C21.49 64 0 85.49 0 112v288c0 26.51 21.49 48 48 48h416c26.51 0 48-21.49 48-48V176c0-26.51-21.49-48-48-48z"/></svg>
<span class="t" id="t80" style="left:10.60px;transform-origin:0 50%;top:479.96px;font-size:9.49px;line-height:13.29px;font-weight:400;color:#474747;transform:scaleX(0.8440);">Persediaan</span>
<svg style="left:145.80px;top:483.80px;width:6px;height:4px" viewBox="0 0 6 4"><path d="M0.6,0.8 L3,3.2 L5.4,0.8" fill="none" stroke="#555" stroke-width="1.3"/></svg>
<svg style="left:-2.60px;top:501.10px;width:9.20px;height:8.00px" viewBox="0 64 512 384" preserveAspectRatio="none"><path fill="#6a6a6a" d="M464 128H272l-64-64H48C21.49 64 0 85.49 0 112v288c0 26.51 21.49 48 48 48h416c26.51 0 48-21.49 48-48V176c0-26.51-21.49-48-48-48z"/></svg>
<span class="t" id="t81" style="left:10.60px;transform-origin:0 50%;top:499.26px;font-size:9.49px;line-height:13.29px;font-weight:400;color:#474747;transform:scaleX(0.8516);">Sinkronisasi Renja-RKA</span>
<svg style="left:145.80px;top:503.10px;width:6px;height:4px" viewBox="0 0 6 4"><path d="M0.6,0.8 L3,3.2 L5.4,0.8" fill="none" stroke="#555" stroke-width="1.3"/></svg>
<svg style="left:-2.60px;top:520.60px;width:9.20px;height:8.00px" viewBox="0 64 512 384" preserveAspectRatio="none"><path fill="#6a6a6a" d="M464 128H272l-64-64H48C21.49 64 0 85.49 0 112v288c0 26.51 21.49 48 48 48h416c26.51 0 48-21.49 48-48V176c0-26.51-21.49-48-48-48z"/></svg>
<span class="t" id="t82" style="left:10.60px;transform-origin:0 50%;top:518.75px;font-size:9.49px;line-height:13.29px;font-weight:400;color:#474747;transform:scaleX(0.8324);">KPPN</span>
<svg style="left:145.80px;top:522.60px;width:6px;height:4px" viewBox="0 0 6 4"><path d="M0.6,0.8 L3,3.2 L5.4,0.8" fill="none" stroke="#555" stroke-width="1.3"/></svg>
<div class="" style="left:0.00px;top:9.50px;width:875.00px;height:47.10px;background:linear-gradient(90deg,#3a1b70 18.2%,#45208c 55%,#45208c 100%);box-shadow:0 1px 3px rgba(0,0,0,.35);"></div>
<div class="" style="left:0.00px;top:9.50px;width:158.90px;height:47.10px;background:linear-gradient(90deg,#3a1c70 0%,#45208c 65%,#45208c 100%);"></div>
<svg style="left:0;top:16px;width:14px;height:36px" viewBox="0 0 14 36"><defs><linearGradient id="lg" x1="0" y1="0" x2="0.300" y2="1"><stop offset="0" stop-color="#25a6ff"/><stop offset="0.550" stop-color="#1484fa"/><stop offset="1" stop-color="#0a62e6"/></linearGradient><linearGradient id="lg2" x1="0" y1="0" x2="1" y2="1"><stop offset="0" stop-color="#0b5fe0" stop-opacity="0.100"/><stop offset="1" stop-color="#0a4fd0" stop-opacity="0.850"/></linearGradient></defs><path d="M10.900,2 L10.900,27.200 L1.900,32.900 L1.900,10.600 C2.600,7.400 6.200,3.900 10.900,2 z" fill="url(#lg)"/><path d="M2.600,8.600 C4.500,14 8.500,21.500 10.900,27.200 L10.900,18.500 C8.500,14.500 5.500,9.500 4.200,6.600 z" fill="url(#lg2)"/></svg>
<span class="t" id="t83" style="left:14.80px;transform-origin:0 50%;top:17.62px;font-size:18.4px;line-height:25.76px;font-weight:400;color:#ece8f5;transform:scaleX(0.9464);">sakti</span>
<svg style="left:146px;top:24px;width:20px;height:22px" viewBox="0 0 20 22"><rect x="1.60" y="1.80" width="17.40" height="19.00" rx="2.5" fill="#ffffff"/></svg>
<svg style="left:151.5px;top:29.8px;width:9px;height:11px" viewBox="0 0 9 11"><path d="M7.200,0.600 L2.400,5.500 L7.200,10.400" fill="none" stroke="#35186a" stroke-width="2.600"/></svg>
<span class="t" id="t84" style="left:176.60px;transform-origin:0 50%;top:28.26px;font-size:8.77px;line-height:12.28px;font-weight:400;color:#fff;transform:scaleX(0.8460);">saktichecker18 - 2022 - KANTOR UPBU TEBELIAN(413931) - 41393100 - OPERATOR - PUSAT</span>
<svg style="left:776.20px;top:25.60px;width:15.80px;height:19.20px" viewBox="0 0 448 512" preserveAspectRatio="none"><path fill="#fff" d="M224 512c35.32 0 63.97-28.65 63.970-64H160.030c0 35.350 28.650 64 63.970 64zm215.390-149.710c-19.320-20.760-55.470-51.990-55.470-154.290 0-77.700-54.480-139.900-127.940-155.160V32c0-17.670-14.320-32-31.980-32s-31.980 14.330-31.980 32v20.840C118.560 68.100 64.080 130.300 64.080 208c0 102.300-36.150 133.530-55.470 154.290-6 6.450-8.660 14.160-8.610 21.710.11 16.400 12.980 32 32.100 32h383.800c19.120 0 32-15.600 32.100-32 .05-7.550-2.610-15.270-8.610-21.710z"/></svg>
<svg style="left:786px;top:21px;width:10px;height:14px" viewBox="0 0 10 14"><ellipse cx="4.800" cy="6.600" rx="3.500" ry="5.500" fill="#f51525"/></svg>
<span class="t" id="t85" style="left:788.90px;transform-origin:0 50%;top:22.56px;font-size:7.34px;line-height:10.28px;font-weight:400;color:#fff;transform:scaleX(0.9318);">2</span>
<svg style="left:803px;top:21.5px;width:11px;height:27px" viewBox="0 0 11 27"><path d="M1.300,5.600 L8.700,1 L8.700,21.800 L1.300,26 z" fill="none" stroke="#d9d2ea" stroke-width="1.100"/></svg>
<span class="t" id="t86" style="left:814.20px;transform-origin:0 50%;top:22.92px;font-size:9.69px;line-height:13.57px;font-weight:700;color:#fff;transform:scaleX(0.9206);">mon</span>
<span class="t" id="t87" style="left:814.20px;transform-origin:0 50%;top:31.88px;font-size:7.75px;line-height:10.85px;font-weight:400;color:#bdb2d8;transform:scaleX(0.9286);">sakti</span>
<svg style="left:844.80px;top:26.20px;width:17.60px;height:17.60px" viewBox="0 0 512 512" preserveAspectRatio="none"><path fill="#fff" d="M497 273L329 441c-15 15-41 4.500-41-17v-96H152c-13.300 0-24-10.700-24-24v-96c0-13.300 10.700-24 24-24h136V88c0-21.400 25.900-32 41-17l168 168c9.300 9.400 9.300 24.600 0 34zM192 436v-40c0-6.600-5.400-12-12-12H96c-17.700 0-32-14.300-32-32V160c0-17.700 14.300-32 32-32h84c6.600 0 12-5.400 12-12V76c0-6.600-5.400-12-12-12H96c-53 0-96 43-96 96v192c0 53 43 96 96 96h84c6.600 0 12-5.400 12-12z"/></svg>
<div class="" style="left:0.00px;top:0.00px;width:875.00px;height:9.50px;background:#333333;border-bottom:1px solid #585858;"></div>
<div class="" style="left:70.00px;top:-6.00px;width:693.00px;height:11.50px;background:#161616;border-radius:6px;"></div>
<div class="" style="left:5.00px;top:0.00px;width:5.00px;height:1.40px;background:#9a9a9a;"></div>
<div class="" style="left:28.00px;top:0.00px;width:2.00px;height:1.40px;background:#9a9a9a;"></div>
<div class="" style="left:50.00px;top:0.00px;width:6.00px;height:1.40px;background:#9a9a9a;"></div>
<div class="" style="left:290.00px;top:0.00px;width:1.00px;height:1.40px;background:#9a9a9a;"></div>
<div class="" style="left:585.00px;top:0.00px;width:1.00px;height:1.40px;background:#9a9a9a;"></div>
<div class="" style="left:728.00px;top:0.00px;width:5.00px;height:1.40px;background:#9a9a9a;"></div>
<div class="" style="left:693.00px;top:0.00px;width:4.00px;height:1.40px;background:#9a9a9a;"></div>
<div class="" style="left:747.00px;top:0.00px;width:3.00px;height:1.40px;background:#9a9a9a;"></div>
<div class="" style="left:775.00px;top:0.00px;width:5.00px;height:1.40px;background:#9a9a9a;"></div>
<div class="" style="left:797.00px;top:0.00px;width:4.00px;height:1.40px;background:#9a9a9a;"></div>
<div class="" style="left:820.00px;top:0.00px;width:5.00px;height:1.40px;background:#9a9a9a;"></div>
<div class="" style="left:862.00px;top:0.00px;width:2.00px;height:1.40px;background:#9a9a9a;"></div>
</body></html>
